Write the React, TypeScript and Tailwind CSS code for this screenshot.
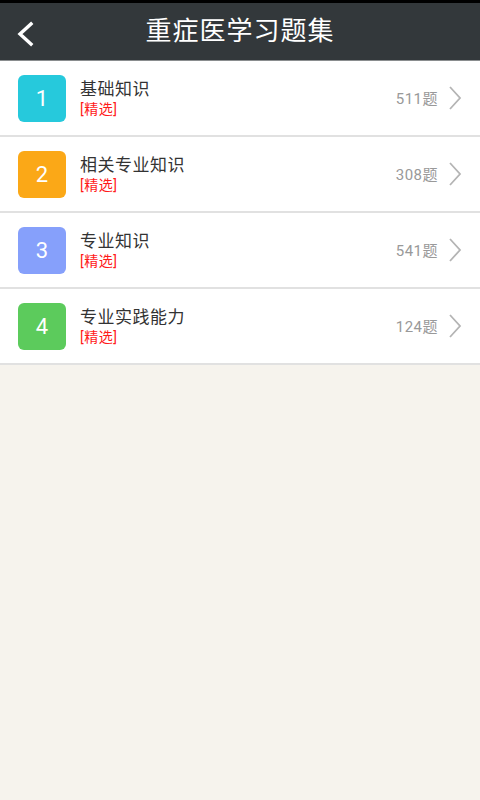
const items = [
	{ n: "1", title: "基础知识", count: "511题", color: "bg-[#26c9dc]" },
	{ n: "2", title: "相关专业知识", count: "308题", color: "bg-[#fba817]" },
	{ n: "3", title: "专业知识", count: "541题", color: "bg-[#86a0fb]" },
	{ n: "4", title: "专业实践能力", count: "124题", color: "bg-[#5ccb5c]" },
];

const font = { fontFamily: '"Roboto", "Noto Sans CJK SC", sans-serif' };

export default function App() {
	return (
		<div className="w-[480px] h-[800px] bg-[#f6f3ed] flex flex-col" style={font}>
			<div className="h-[3px] bg-black" />
			<div className="h-[58px] bg-[#33383b] relative flex items-center justify-center border-b border-[#8a8d8f]">
				<svg className="absolute left-[14px] top-[17px]" width="22" height="28" viewBox="0 0 22 28">
					<path d="M17 4 L6 14 L17 24" fill="none" stroke="#fff" strokeWidth="3.4" strokeLinecap="square" />
				</svg>
				<span className="text-white text-[26px] tracking-[1px]">重症医学习题集</span>
			</div>
			{items.map((it) => (
				<div key={it.n} className="h-[76px] bg-white border-b-2 border-[#e1e1e1] flex items-center pl-[18px] pr-[18px]">
					<div className={`${it.color} w-[48px] h-[47px] rounded-[6px] flex items-center justify-center text-white text-[22px]`}>
						{it.n}
					</div>
					<div className="ml-[14px] flex-1 flex flex-col leading-none">
						<span className="text-[#333] text-[17px] tracking-[0.5px]">{it.title}</span>
						<span className="text-[#ff1a1a] text-[14px] mt-[4px] tracking-[0.5px]">[精选]</span>
					</div>
					<span className="text-[#999] text-[15px] tracking-[0.5px] mt-[2px]">{it.count}</span>
					<svg className="ml-[10px]" width="14" height="24" viewBox="0 0 14 24">
						<path d="M2 1 L12 12 L2 23" fill="none" stroke="#b4b4b4" strokeWidth="1.8" />
					</svg>
				</div>
			))}
		</div>
	);
}
